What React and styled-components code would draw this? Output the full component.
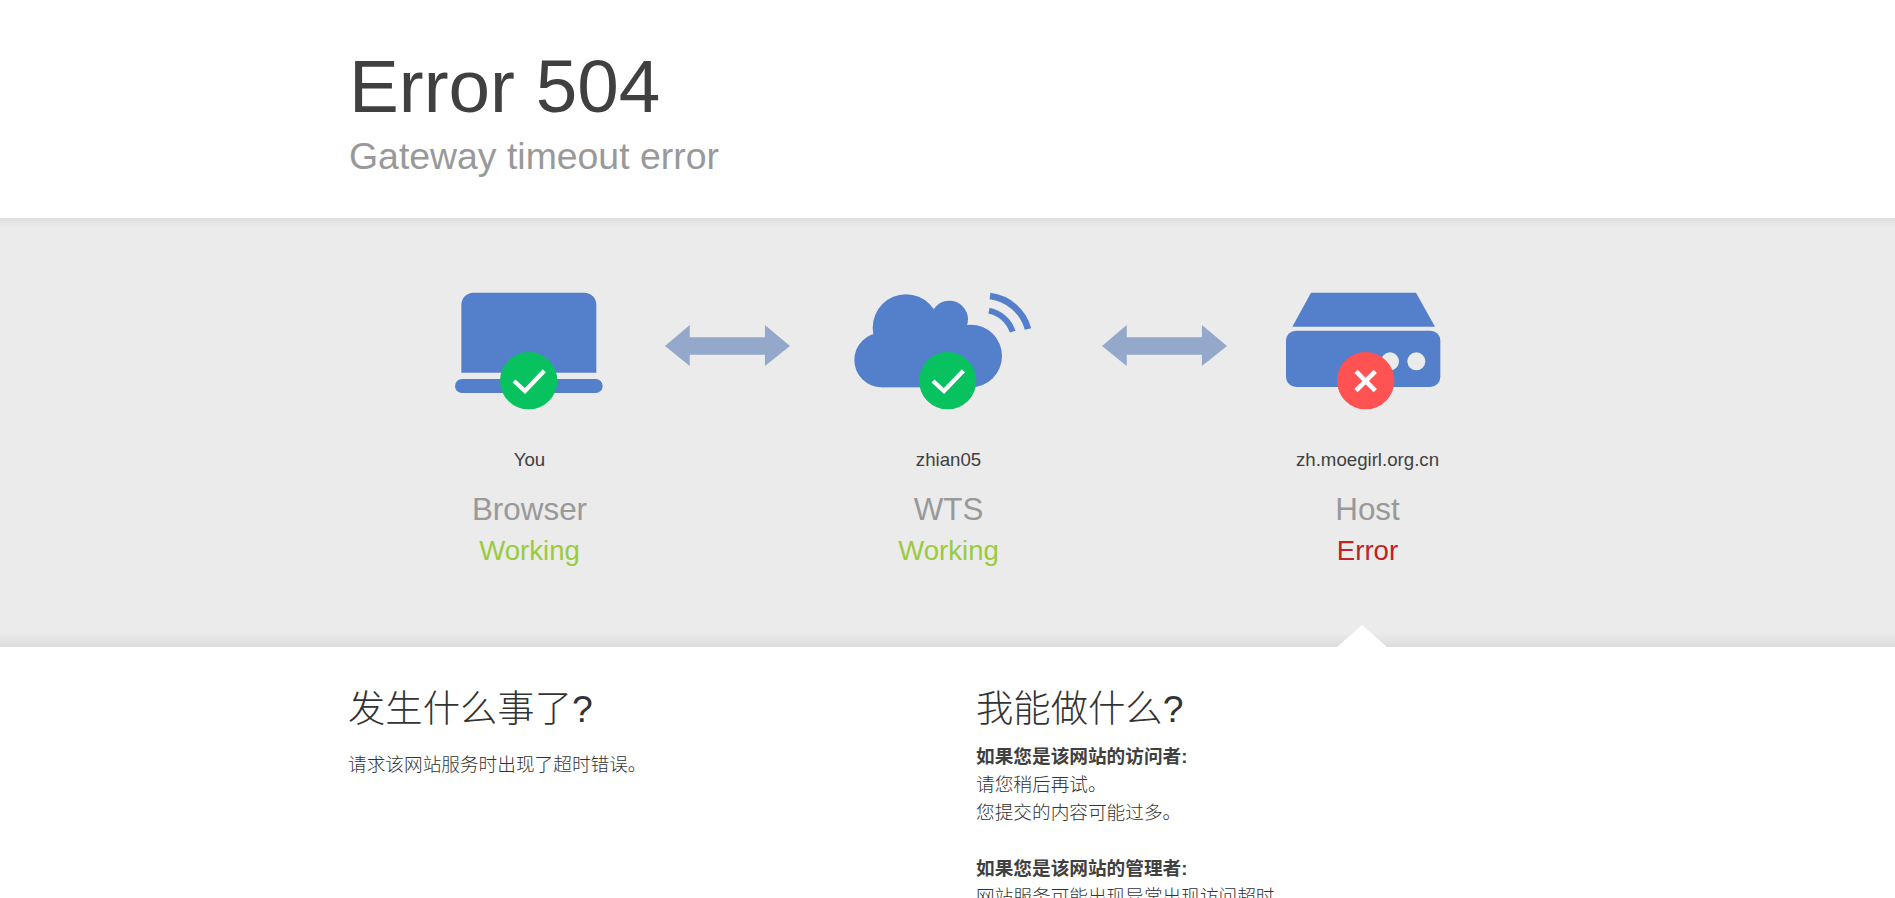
import React from "react";
import styled, { createGlobalStyle } from "styled-components";

const Global = createGlobalStyle`
  html, body { margin: 0; padding: 0; background: #fff; }
  body {
    height: 100vh;
    overflow: hidden;
    font-family: "Liberation Sans", "Noto Sans CJK SC", sans-serif;
    font-size: 18.67px;
    line-height: 28px;
    color: #404040;
  }
`;

const Container = styled.div`
  width: 1197px;
  margin: 0 auto;
`;
const Hero = styled.header`
  height: 218px;
  box-sizing: border-box;
  padding-top: 44px;
`;
const Title = styled.h1`
  margin: 0;
  font-size: 74.67px;
  font-weight: 400;
  line-height: 84px;
  color: #404040;
`;
const Subtitle = styled.h2`
  margin: 6px 0 0;
  font-size: 37.4px;
  font-weight: 400;
  line-height: 44px;
  color: #999;
`;
const Band = styled.section`
  height: 429px;
  box-sizing: border-box;
  padding-top: 67px;
  background: linear-gradient(
    #e0e0e0,
    #ebebeb 10px,
    #ebebeb calc(100% - 14px),
    #dcdcdc
  );
`;
const Stage = styled.div`
  width: 1038px;
  margin: 0 auto;
  display: flex;
  align-items: flex-start;
`;
const Node = styled.div`
  width: 200px;
  flex: none;
  text-align: center;
`;
const Icon = styled.svg`
  display: block;
  width: 200px;
  height: 130px;
`;
const Arrow = styled.svg`
  display: block;
  flex: none;
  width: 125px;
  height: 41px;
  margin-top: 40px;
  margin-left: ${(p) => p.$left}px;
  margin-right: ${(p) => p.$right}px;
`;
const Caption = styled.div`
  padding-left: 2px;
`;
const Name = styled.div`
  margin-top: 31px;
  line-height: 28px;
  font-size: 18.67px;
  color: #404040;
  white-space: nowrap;
`;
const Role = styled.div`
  margin-top: 18px;
  font-size: 31.4px;
  line-height: 36px;
  color: #999;
`;
const Status = styled.div`
  margin-top: 5px;
  font-size: 27.6px;
  line-height: 36px;
  color: ${(p) => p.$color};
`;
const Lower = styled.section`
  position: relative;
  background: #fff;
  &::before {
    content: "";
    position: absolute;
    left: 1337px;
    top: -22px;
    border-left: 25px solid transparent;
    border-right: 25px solid transparent;
    border-bottom: 22px solid #fff;
  }
`;
const Columns = styled(Container)`
  display: grid;
  grid-template-columns: 628px 1fr;
  padding-top: 38px;
  transform: translateX(-1px);
`;
const Heading = styled.h3`
  margin: 0 0 10px;
  font-size: 37.33px;
  font-weight: 300;
  line-height: 48px;
  color: #333;
`;
const Para = styled.p`
  margin: 0 0 28px;
  padding-top: ${(p) => p.$top || 0}px;
  font-weight: 300;
  color: #333;
  strong { font-weight: 700; color: #404040; }
`;

const BLUE = "#5480cb";
const GREEN = "#08c25f";
const RED = "#ff5252";

const Ok = ({ cx }) => (
  <>
    <circle cx={cx} cy="332" r="86" fill={GREEN} />
    <path
      d={`M${cx - 44} 333 L${cx - 11} 363 L${cx + 47} 302`}
      fill="none"
      stroke="#fff"
      strokeWidth="13"
    />
  </>
);

const Bad = ({ cx }) => (
  <>
    <circle cx={cx} cy="332" r="86" fill={RED} />
    <path
      d={`M${cx - 29} 304 L${cx + 29} 362 M${cx + 29} 304 L${cx - 29} 362`}
      fill="none"
      stroke="#fff"
      strokeWidth="14"
    />
  </>
);

const DoubleArrow = (p) => (
  <Arrow viewBox="736 165 374 123" preserveAspectRatio="none" {...p}>
    <path
      d="M736 228 L810 165 V202 H1035 V165 L1110 228 L1035 288 V254 H810 V288 Z"
      fill="#94a8cc"
    />
  </Arrow>
);

export default function App() {
  return (
    <>
      <Global />
      <Hero>
        <Container>
          <Title>Error 504</Title>
          <Subtitle>Gateway timeout error</Subtitle>
        </Container>
      </Hero>
      <Band>
        <Stage>
          <Node>
            <Icon viewBox="27 45 600 390">
              <path
                d="M124 308 V104 a36 36 0 0 1 36 -36 H493 a36 36 0 0 1 36 36 V308 Z"
                fill={BLUE}
              />
              <rect x="105" y="327" width="443" height="42" rx="21" fill={BLUE} />
              <Ok cx={326} />
            </Icon>
            <Caption>
              <Name>You</Name>
              <Role>Browser</Role>
              <Status $color="#9bca3e">Working</Status>
            </Caption>
          </Node>
          <DoubleArrow $left={36} $right={58} />
          <Node>
            <Icon viewBox="84 45 600 390">
              <g fill={BLUE}>
                <circle cx="185" cy="270" r="82" />
                <circle cx="258" cy="173" r="100" />
                <circle cx="388" cy="148" r="56" />
                <circle cx="452" cy="258" r="94" />
                <rect x="185" y="190" width="267" height="162" />
              </g>
              <g fill="none" stroke={BLUE}>
                <path d="M510 78 A 135 135 0 0 1 624 177" strokeWidth="20" />
                <path d="M507 122 A 95 95 0 0 1 578 185" strokeWidth="18" />
              </g>
              <Ok cx={383} />
            </Icon>
            <Caption>
              <Name>zhian05</Name>
              <Role>WTS</Role>
              <Status $color="#9bca3e">Working</Status>
            </Caption>
          </Node>
          <DoubleArrow $left={54} $right={40} />
          <Node>
            <Icon viewBox="561 45 600 390">
              <path d="M693 68 H1008 L1065 170 H637 Z" fill={BLUE} />
              <rect x="618" y="182" width="463" height="169" rx="30" fill={BLUE} />
              <circle cx="930" cy="274" r="27" fill="#ebebeb" />
              <circle cx="1009" cy="274" r="27" fill="#ebebeb" />
              <Bad cx={857} />
            </Icon>
            <Caption>
              <Name>zh.moegirl.org.cn</Name>
              <Role>Host</Role>
              <Status $color="#bd2426">Error</Status>
            </Caption>
          </Node>
        </Stage>
      </Band>
      <Lower>
        <Columns>
          <div>
            <Heading>发生什么事了?</Heading>
            <Para $top={8}>请求该网站服务时出现了超时错误。</Para>
          </div>
          <div>
            <Heading>我能做什么?</Heading>
            <Para>
              <strong>如果您是该网站的访问者:</strong>
              <br />
              请您稍后再试。
              <br />
              您提交的内容可能过多。
            </Para>
            <Para>
              <strong>如果您是该网站的管理者:</strong>
              <br />
              网站服务可能出现异常出现访问超时
            </Para>
          </div>
        </Columns>
      </Lower>
    </>
  );
}
